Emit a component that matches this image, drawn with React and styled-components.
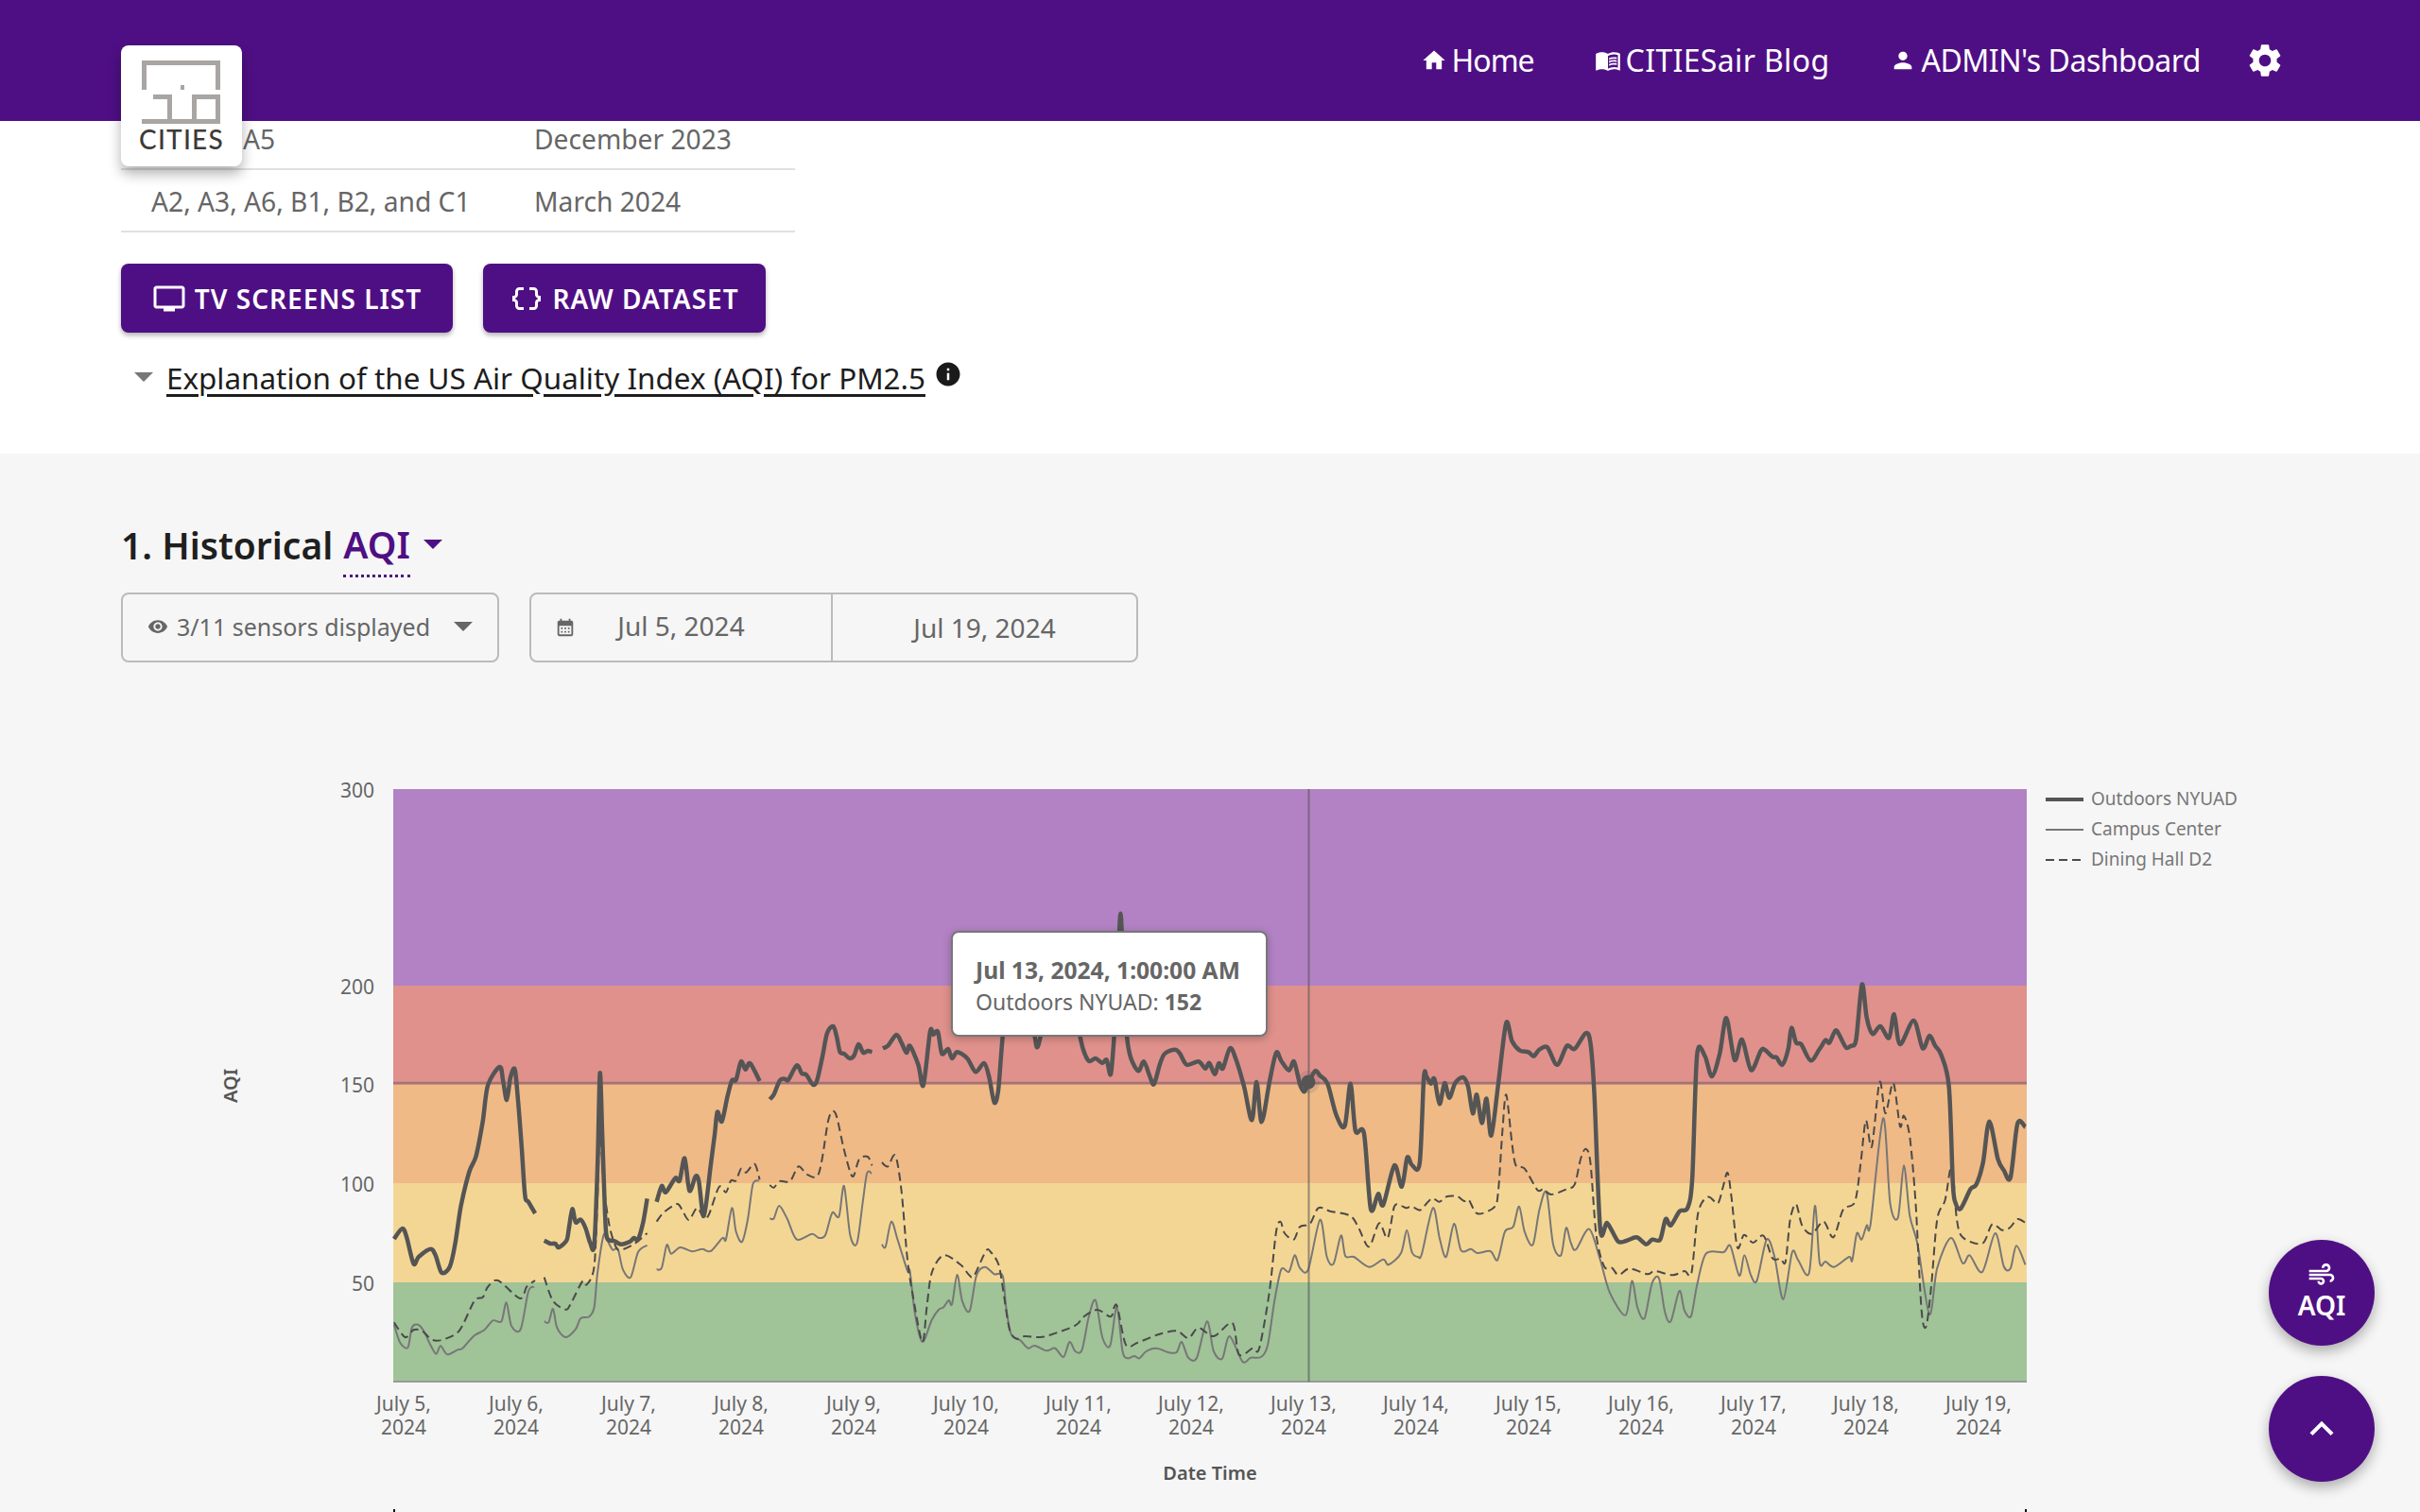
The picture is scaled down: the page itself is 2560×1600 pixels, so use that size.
import React from 'react'
import styled, { createGlobalStyle } from 'styled-components'
import {
  MdHome, MdMenuBook, MdPerson, MdSettings, MdTv, MdDataObject, MdInfo,
  MdVisibility, MdCalendarMonth, MdAir, MdKeyboardArrowUp,
} from 'react-icons/md'

const FONT = '"Noto Sans", Roboto, sans-serif'
const VIOLET = '#4f0f84'

// crop coordinates -> page coordinates
const c4 = pts => pts.map(([x, y]) => [400 + x / 2.8, 1000 + y / 3])
const c5 = pts => pts.map(([x, y]) => [950 + x / 2.8, 950 + y / 3])
const c6 = pts => pts.map(([x, y]) => [1500 + x / 2.4123, 1040 + y / 3])

const joinParts = (...parts) => {
  const out = []
  parts.flat().forEach(p => {
    if (!out.length || p[0] > out[out.length - 1][0]) out.push(p)
  })
  return out
}

const smoothPath = pts => {
  let d = `M${pts[0][0].toFixed(1)} ${pts[0][1].toFixed(1)}`
  const k = 0.15
  for (let i = 0; i < pts.length - 1; i++) {
    const p0 = pts[i - 1] || pts[i]
    const p1 = pts[i]
    const p2 = pts[i + 1]
    const p3 = pts[i + 2] || p2
    const a = [p1[0] + (p2[0] - p0[0]) * k, p1[1] + (p2[1] - p0[1]) * k]
    const b = [p2[0] - (p3[0] - p1[0]) * k, p2[1] - (p3[1] - p1[1]) * k]
    d += `C${a[0].toFixed(1)} ${a[1].toFixed(1)} ${b[0].toFixed(1)} ${b[1].toFixed(1)} ${p2[0].toFixed(1)} ${p2[1].toFixed(1)}`
  }
  return d
}

const outdoors = [
  c4([[47,933],[72,900],[85,930],[105,1012],[120,990],[155,965],[170,985],[188,1040],[212,1022],[228,950],[245,830],[270,720],[290,670],[310,560],[325,445],[360,387],[370,430],[381,492],[392,420],[405,395],[415,500],[425,640],[435,795],[445,815],[465,852]]),
  c4([[492,938],[510,948],[525,948],[535,960],[558,938],[565,900],[575,838],[585,880],[600,872],[615,900],[628,945],[640,952],[650,700],[657,407],[664,600],[672,850],[678,930],[700,940],[720,950],[745,942],[758,930],[770,935],[785,880],[797,805]]),
  c4([[825,815],[840,765],[852,785],[880,740],[893,748],[908,677],[922,780],[940,735],[950,750],[965,860],[985,700],[997,600],[1005,530],[1018,560],[1035,480],[1048,430],[1060,428],[1075,370],[1088,395],[1102,376],[1130,432]]),
  c4([[1160,490],[1172,475],[1190,430],[1205,425],[1215,428],[1240,382],[1255,408],[1268,412],[1288,443],[1300,430],[1315,360],[1330,280],[1348,258],[1358,290],[1368,340],[1380,345],[1397,360],[1410,350],[1423,315],[1437,342],[1450,336],[1463,340]]),
  joinParts(
    c4([[1495,328],[1510,320],[1535,285],[1550,310],[1565,342]]),
    c5([[35,470],[60,530],[75,595],[95,425],[105,435],[118,425],[130,495],[148,480],[160,510],[175,490],[205,510],[230,553],[255,525],[270,570],[285,650],[297,610],[310,440],[330,250],[360,300],[390,350],[405,440],[412,475],[422,440],[450,300],[500,300],[530,400],[548,480],[565,518],[585,510],[605,525],[618,515],[630,560],[640,440],[650,250],[659,50],[668,250],[678,440],[690,510],[712,550],[728,520],[745,565],[758,592],[775,530],[790,495],[820,482],[835,495],[855,530],[890,520],[910,542],[922,525],[938,560],[950,525],[962,542],[983,478],[1000,510],[1025,600],[1048,706],[1062,585],[1077,712],[1100,585],[1120,492],[1135,518],[1158,548],[1173,520],[1190,590],[1203,616],[1215,590],[1235,550],[1250,565],[1272,590],[1298,690],[1323,725],[1340,590],[1355,740],[1380,748],[1400,988],[1422,940],[1437,975],[1470,850],[1492,917],[1508,825],[1522,848],[1545,843]]),
    c6([[15,300],[22,298],[33,320],[42,305],[55,385],[68,318],[80,365],[95,318],[115,300],[128,330],[140,415],[150,355],[163,445],[175,368],[187,485],[205,320],[225,128],[240,185],[260,215],[282,220],[295,233],[310,212],[330,205],[355,260],[380,200],[400,210],[428,160],[440,190],[450,350],[465,780],[483,763],[510,820],[530,820],[558,808],[582,830],[598,815],[618,815],[632,750],[645,770],[668,725],[688,715],[700,620],[712,230],[732,232],[750,297],[770,225],[787,112],[808,245],[827,180],[850,277],[875,215],[885,213],[905,235],[915,237],[930,260],[945,210],[953,143],[965,190],[978,195],[1002,247],[1025,210],[1040,182],[1050,190],[1065,152],[1075,165],[1092,205],[1105,200],[1118,180],[1133,5],[1145,110],[1160,162],[1180,138],[1202,175],[1215,100],[1230,195],[1265,120],[1288,208],[1305,168],[1320,200],[1335,228],[1355,330],[1365,640],[1372,700],[1385,717],[1410,655],[1425,640],[1442,570],[1458,440],[1480,560],[1495,595],[1512,618],[1530,447],[1550,458]]),
  ),
]

const campus = [
  c4([[47,1205],[65,1262],[88,1278],[100,1215],[118,1205],[135,1225],[155,1270],[172,1298],[185,1273],[205,1300],[235,1285],[250,1280],[285,1240],[315,1222],[340,1192],[365,1195],[380,1135],[395,1210],[422,1220],[445,1100],[462,1085]]),
  c4([[492,1195],[505,1198],[518,1155],[530,1215],[555,1245],[585,1220],[600,1185],[625,1180],[640,1150],[650,1040],[668,920],[680,940],[695,968],[710,965],[725,1030],[748,1055],[770,975],[797,953]]),
  c4([[825,1030],[840,1025],[855,952],[868,980],[895,960],[930,973],[960,965],[985,972],[1020,930],[1030,935],[1048,835],[1060,910],[1078,942],[1095,870],[1110,760],[1128,748]]),
  c4([[1160,868],[1172,868],[1188,828],[1212,870],[1240,935],[1285,917],[1305,930],[1325,920],[1345,850],[1365,862],[1380,765],[1398,920],[1418,948],[1435,820],[1448,725],[1462,725]]),
  joinParts(
    c4([[1492,950],[1503,958],[1520,878],[1540,940],[1568,1035]]),
    c5([[35,1185],[50,1320],[72,1410],[100,1340],[120,1308],[135,1300],[150,1278],[160,1290],[175,1197],[190,1280],[212,1312],[232,1200],[257,1172],[285,1195],[310,1200],[320,1300],[335,1385],[362,1405],[385,1430],[405,1422],[440,1438],[465,1430],[490,1458],[508,1410],[525,1440],[545,1435],[565,1330],[585,1278],[605,1395],[628,1422],[648,1300],[665,1440],[680,1462],[700,1455],[715,1462],[735,1440],[765,1430],[800,1443],[825,1443],[840,1410],[860,1460],[885,1460],[915,1345],[935,1440],[960,1463],[982,1392],[1020,1472],[1045,1460],[1075,1458],[1095,1420],[1115,1280],[1135,1180],[1158,1187],[1175,1135],[1190,1175],[1215,1180],[1250,1022],[1270,1140],[1290,1162],[1312,1072],[1325,1138],[1350,1140],[1395,1172],[1437,1148],[1453,1165],[1490,1128],[1507,1055],[1522,1125],[1540,1140]]),
    c6([[10,860],[38,715],[55,810],[72,870],[92,765],[110,850],[135,845],[152,858],[185,852],[203,880],[222,790],[243,775],[258,710],[272,790],[293,832],[310,720],[328,665],[345,830],[365,865],[378,778],[390,825],[403,847],[437,782],[465,880],[490,985],[530,1055],[546,947],[560,1030],[578,1065],[597,955],[615,938],[630,1045],[645,1075],[667,978],[680,1040],[697,1058],[712,960],[735,860],[780,855],[797,835],[820,930],[833,865],[850,930],[865,945],[890,815],[910,870],[932,1005],[955,855],[970,880],[998,922],[1013,708],[1025,888],[1040,885],[1062,902],[1100,870],[1108,882],[1120,795],[1132,815],[1145,770],[1155,765],[1187,430],[1205,700],[1225,745],[1240,580],[1255,740],[1275,830],[1305,1052],[1325,905],[1360,810],[1390,890],[1408,865],[1440,918],[1473,795],[1495,900],[1512,907],[1527,835],[1550,895]]),
  ),
]

const dining = [
  c4([[47,1198],[80,1245],[105,1222],[130,1225],[160,1253],[190,1253],[240,1225],[285,1130],[310,1118],[325,1085],[355,1065],[420,1122],[440,1085],[465,1065]]),
  c4([[492,1055],[518,1130],[555,1157],[570,1140],[605,1068],[618,1078],[640,1020],[650,800],[657,580],[668,760],[685,890],[705,960],[720,968],[760,948],[797,915]]),
  c4([[825,878],[845,850],[885,822],[900,840],[920,873],[945,835],[965,868],[980,855],[1010,768],[1030,785],[1045,748],[1060,748],[1075,710],[1090,722],[1115,695],[1130,745]]),
  c4([[1160,762],[1172,770],[1190,750],[1220,750],[1245,703],[1270,728],[1300,735],[1315,680],[1335,550],[1355,535],[1380,650],[1405,735],[1425,680],[1450,672],[1463,700]]),
  joinParts(
    c4([[1492,690],[1510,703],[1532,668],[1550,780],[1568,1000]]),
    c5([[45,1270],[72,1410],[85,1300],[100,1190],[135,1135],[185,1165],[210,1197],[225,1200],[260,1122],[275,1125],[298,1165],[312,1250],[330,1370],[350,1400],[375,1392],[420,1395],[450,1388],[525,1358],[550,1330],[590,1308],[630,1330],[640,1300],[650,1300],[675,1420],[710,1412],[770,1387],[825,1375],[860,1398],[890,1365],[935,1392],[990,1350],[1010,1450],[1050,1430],[1070,1430],[1100,1250],[1120,1060],[1133,1028],[1145,1065],[1172,1085],[1190,1045],[1220,1035],[1245,985],[1280,995],[1340,1010],[1365,1050],[1395,1108],[1425,1033],[1450,1080],[1470,980],[1490,978],[1505,985],[1520,980],[1540,990]]),
    c6([[8,720],[35,685],[55,695],[75,678],[100,678],[118,693],[130,690],[152,733],[195,712],[205,660],[215,480],[225,355],[240,510],[250,580],[272,590],[305,658],[320,655],[340,672],[380,655],[400,640],[415,560],[428,527],[440,570],[455,800],[475,900],[495,905],[512,928],[540,907],[585,925],[605,915],[650,928],[680,915],[698,920],[715,730],[740,680],[765,700],[778,650],[790,603],[800,680],[815,840],[832,800],[855,825],[882,803],[905,875],[925,875],[938,885],[950,750],[965,703],[980,770],[1005,797],[1035,758],[1060,808],[1085,720],[1115,695],[1130,570],[1143,437],[1158,520],[1178,315],[1193,415],[1213,318],[1230,455],[1240,422],[1255,490],[1270,700],[1285,1040],[1297,1090],[1310,960],[1325,750],[1345,690],[1358,595],[1365,600],[1375,750],[1390,808],[1440,828],[1465,767],[1490,785],[1510,778],[1530,750],[1550,762]]),
  ),
]

const bands = [
  { top: 835, bottom: 1043, color: '#b382c4' },
  { top: 1043, bottom: 1148, color: '#e0918c' },
  { top: 1148, bottom: 1252, color: '#efba86' },
  { top: 1252, bottom: 1357, color: '#f4d694' },
  { top: 1357, bottom: 1462, color: '#a0c398' },
]
const yTicks = [['300', 838], ['200', 1046], ['150', 1150], ['100', 1255], ['50', 1360]]
const legend = [
  { label: 'Outdoors NYUAD', y: 846, stroke: '#555', width: 4 },
  { label: 'Campus Center', y: 878, stroke: '#777', width: 2 },
  { label: 'Dining Hall D2', y: 910, stroke: '#4a4a4a', width: 2, dash: '9 5' },
]
const days = Array.from({ length: 15 }, (_, i) => i + 5)

const GlobalStyle = createGlobalStyle`
  html, body { margin: 0; padding: 0; background: #f6f6f6; }
  body { font-family: ${FONT}; overflow: hidden; }
`

const Page = styled.div`
  position: relative;
  width: 2560px;
  height: 1600px;
  overflow: hidden;
`

const Header = styled.header`
  position: relative;
  z-index: 5;
  height: 128px;
  background: ${VIOLET};
  display: flex;
  align-items: center;
  justify-content: flex-end;
  padding-right: 143px;
`

const LogoCard = styled.div`
  position: absolute;
  left: 128px;
  top: 48px;
  width: 128px;
  height: 128px;
  background: #fff;
  border-radius: 8px;
  box-shadow: 0 8px 14px rgba(0, 0, 0, 0.3);
  display: flex;
  flex-direction: column;
  align-items: center;
  box-sizing: border-box;
  padding-top: 16px;
`

const LogoName = styled.span`
  font-family: Lato, sans-serif;
  font-size: 28px;
  line-height: 27px;
  font-weight: 500;
  letter-spacing: 1.2px;
  color: #3d3a38;
  margin-top: 2px;
`

const Nav = styled.nav`
  display: flex;
  align-items: center;
`

const NavLink = styled.a`
  display: flex;
  align-items: center;
  gap: 5px;
  margin-right: 64px;
  color: #fff;
  font-size: 32px;
  line-height: 40px;
  letter-spacing: ${p => p.$track}px;
  svg { width: 28px; height: 28px; }
`

const Gear = styled(MdSettings)`
  width: 42px;
  height: 42px;
  color: #fff;
  margin-left: -17px;
`

const TopSection = styled.section`
  background: #fff;
  height: 366px;
  margin-top: -14px;
  padding: 0 128px;
`

const InfoTable = styled.div`
  width: 713px;
`

const InfoRow = styled.div`
  display: grid;
  grid-template-columns: 405px 1fr;
  height: 66px;
  box-sizing: border-box;
  padding: 1px 0 0 32px;
  align-items: center;
  border-bottom: 2px solid #e0e0e0;
  font-size: 28.2px;
  color: #666;
`

const SensorName = styled.span`
  padding-left: ${p => p.$indent || 0}px;
`

const ButtonRow = styled.div`
  display: flex;
  gap: 32px;
  margin-top: 33px;
`

const ActionButton = styled.button`
  height: 73px;
  width: ${p => p.$w}px;
  display: flex;
  align-items: center;
  justify-content: center;
  gap: 9px;
  border: 0;
  border-radius: 8px;
  background: ${VIOLET};
  color: #fff;
  font-family: ${FONT};
  font-size: 28px;
  font-weight: 600;
  letter-spacing: 1px;
  box-shadow: 0 3px 5px rgba(0, 0, 0, 0.3);
  svg { width: 36px; height: 36px; }
`

const Explain = styled.div`
  display: flex;
  align-items: center;
  margin-top: 26px;
  padding-left: 14px;
  height: 42px;
`

const Caret = styled.span`
  width: 0;
  height: 0;
  border-left: ${p => p.$s}px solid transparent;
  border-right: ${p => p.$s}px solid transparent;
  border-top: ${p => p.$s}px solid ${p => p.$color};
`

const ExplainLink = styled.a`
  margin-left: 14px;
  font-size: 31.4px;
  color: #1d1d1d;
  text-decoration: underline;
  text-underline-offset: 5px;
`

const InfoIcon = styled(MdInfo)`
  width: 30px;
  height: 30px;
  color: #1a1a1a;
  margin: -6px 0 0 9px;
`

const GreySection = styled.section`
  position: relative;
  padding: 65px 128px 0;
`

const Heading = styled.h2`
  margin: 0;
  display: flex;
  align-items: center;
  height: 62px;
  font-size: 39px;
  font-weight: 600;
  color: #1f1f1f;
`

const HeadingMetric = styled.span`
  color: ${VIOLET};
  align-self: flex-start;
  margin-left: 11px;
  margin-right: 14px;
  height: 66px;
  line-height: 62px;
  box-sizing: border-box;
  padding-bottom: 1px;
  border-bottom: 3px dotted ${VIOLET};
`

const Controls = styled.div`
  display: flex;
  gap: 32px;
  margin-top: 20px;
`

const SelectBox = styled.div`
  width: 400px;
  height: 74px;
  box-sizing: border-box;
  border: 2px solid #bbb;
  border-radius: 8px;
  display: flex;
  align-items: center;
  padding: 0 26px 2px 26px;
  gap: 9px;
  font-size: 25px;
  color: #666;
  svg { width: 22px; height: 22px; }
`

const SelectText = styled.span`
  flex: 1;
`

const DateRange = styled.div`
  width: 644px;
  height: 74px;
  box-sizing: border-box;
  border: 2px solid #bbb;
  border-radius: 8px;
  display: grid;
  grid-template-columns: 317px 1fr;
  font-size: 28px;
  color: #666;
`

const DateCell = styled.div`
  display: flex;
  align-items: center;
  justify-content: center;
  position: relative;
  padding-bottom: ${p => (p.$first ? '5px' : '1px')};
  border-left: ${p => (p.$first ? '0' : '2px solid #bbb')};
`

const CalendarIcon = styled(MdCalendarMonth)`
  position: absolute;
  left: 25px;
  top: 24px;
  width: 22px;
  height: 22px;
  color: #666;
`

const ChartSvg = styled.svg`
  position: absolute;
  left: 0;
  top: 300px;
  display: block;
  text { font-family: ${FONT}; }
`

const ChartTooltip = styled.div`
  position: absolute;
  left: 1006px;
  top: 505px;
  width: 335px;
  height: 112px;
  box-sizing: border-box;
  background: #fff;
  border: 2px solid #777;
  border-radius: 8px;
  box-shadow: 0 2px 8px rgba(0, 0, 0, 0.25);
  padding: 23px 0 0 24px;
  color: #666;
  font-size: 23px;
  line-height: 33px;
  white-space: nowrap;
  b { font-weight: 700; }
`

const TooltipTitle = styled.b`
  font-size: 24.6px;
`

const FabColumn = styled.div`
  position: absolute;
  right: 48px;
  bottom: 32px;
  z-index: 6;
  display: flex;
  flex-direction: column;
  gap: 32px;
`

const Fab = styled.button`
  width: 112px;
  height: 112px;
  border: 0;
  border-radius: 50%;
  background: ${VIOLET};
  color: #fff;
  font-family: ${FONT};
  font-size: 28px;
  font-weight: 600;
  line-height: 32px;
  display: flex;
  flex-direction: column;
  align-items: center;
  justify-content: center;
  padding: 0 0 ${p => p.$lift || 0}px;
  box-shadow: 0 6px 14px rgba(0, 0, 0, 0.3);
`

const Chart = () => (
  <ChartSvg width="2560" height="820" viewBox="0 780 2560 820">
    {bands.map(b => (
      <rect key={b.top} x="416" y={b.top} width="1728" height={b.bottom - b.top} fill={b.color} />
    ))}
    <line x1="416" x2="2144" y1="1146" y2="1146" stroke="#555" strokeOpacity="0.45" strokeWidth="2.5" />
    <line x1="416" x2="2144" y1="1462" y2="1462" stroke="#999" strokeWidth="2" />

    {campus.map((s, i) => (
      <path key={i} d={smoothPath(s)} fill="none" stroke="#777" strokeWidth="2" />
    ))}
    {dining.map((s, i) => (
      <path key={i} d={smoothPath(s)} fill="none" stroke="#4a4a4a" strokeWidth="2" strokeDasharray="9 5" />
    ))}
    {outdoors.map((s, i) => (
      <path key={i} d={smoothPath(s)} fill="none" stroke="#555" strokeWidth="4.5" />
    ))}

    <line x1="1384.5" x2="1384.5" y1="835" y2="1462" stroke="#555" strokeOpacity="0.6" strokeWidth="2" />
    <circle cx="1384" cy="1145" r="12" fill="#555" fillOpacity="0.15" />
    <circle cx="1384" cy="1145" r="7.5" fill="#555" />

    {yTicks.map(([label, y]) => (
      <text key={label} x="396" y={y} textAnchor="end" dominantBaseline="middle" fontSize="21" fill="#666">{label}</text>
    ))}
    <text transform="translate(246 1149) rotate(-90)" textAnchor="middle" dominantBaseline="middle" fontSize="20" fontWeight="600" fill="#555">AQI</text>

    {days.map((d, i) => (
      <text key={d} textAnchor="middle" fontSize="21" fill="#666">
        <tspan x={427 + i * 119} y="1493">July {d},</tspan>
        <tspan x={427 + i * 119} y="1518">2024</tspan>
      </text>
    ))}
    <text x="1280" y="1566" textAnchor="middle" fontSize="20" fontWeight="600" fill="#555">Date Time</text>

    {legend.map(l => (
      <g key={l.label}>
        <line x1="2164" x2="2204" y1={l.y} y2={l.y} stroke={l.stroke} strokeWidth={l.width} strokeDasharray={l.dash} />
        <text x="2212" y={l.y + 1} dominantBaseline="middle" fontSize="19" fill="#777">{l.label}</text>
      </g>
    ))}

    <line x1="417" x2="417" y1="1597" y2="1600" stroke="#111" strokeWidth="2" />
    <line x1="2143" x2="2143" y1="1597" y2="1600" stroke="#111" strokeWidth="2" />
  </ChartSvg>
)

const CitiesMark = () => (
  <svg width="84" height="68" viewBox="150 64 84 68" fill="none" stroke="#a8a5a3" strokeWidth="5">
    <path d="M152.5 95V66.5H230.5V95" />
    <rect x="191" y="90" width="4" height="5" fill="#a8a5a3" stroke="none" />
    <path d="M162 102.5H179.5V128.5M150 128.5H233M205.5 128.5V102.5H230.5V131" />
  </svg>
)

export default function App() {
  return (
    <Page>
      <GlobalStyle />
      <Header>
        <LogoCard>
          <CitiesMark />
          <LogoName>CITIES</LogoName>
        </LogoCard>
        <Nav>
          <NavLink $track={-1}><MdHome />Home</NavLink>
          <NavLink $track={0.35}><MdMenuBook />CITIESair Blog</NavLink>
          <NavLink $track={-0.47}><MdPerson />ADMIN's Dashboard</NavLink>
          <Gear />
        </Nav>
      </Header>

      <TopSection>
        <InfoTable>
          <InfoRow><SensorName $indent={97}>A5</SensorName><span>December 2023</span></InfoRow>
          <InfoRow><SensorName>A2, A3, A6, B1, B2, and C1</SensorName><span>March 2024</span></InfoRow>
        </InfoTable>
        <ButtonRow>
          <ActionButton $w={351}><MdTv />TV SCREENS LIST</ActionButton>
          <ActionButton $w={299}><MdDataObject />RAW DATASET</ActionButton>
        </ButtonRow>
        <Explain>
          <Caret $s={10} $color="#777" />
          <ExplainLink>Explanation of the US Air Quality Index (AQI) for PM2.5</ExplainLink>
          <InfoIcon />
        </Explain>
      </TopSection>

      <GreySection>
        <Heading>
          1. Historical
          <HeadingMetric>AQI</HeadingMetric>
          <Caret $s={10} $color={VIOLET} />
        </Heading>
        <Controls>
          <SelectBox>
            <MdVisibility />
            <SelectText>3/11 sensors displayed</SelectText>
            <Caret $s={10} $color="#666" />
          </SelectBox>
          <DateRange>
            <DateCell $first><CalendarIcon />Jul 5, 2024</DateCell>
            <DateCell>Jul 19, 2024</DateCell>
          </DateRange>
        </Controls>
        <Chart />
        <ChartTooltip>
          <TooltipTitle>Jul 13, 2024, 1:00:00 AM</TooltipTitle>
          <br />
          Outdoors NYUAD: <b>152</b>
        </ChartTooltip>
      </GreySection>

      <FabColumn>
        <Fab $lift={6}><MdAir size={32} />AQI</Fab>
        <Fab><MdKeyboardArrowUp size={50} /></Fab>
      </FabColumn>
    </Page>
  )
}
